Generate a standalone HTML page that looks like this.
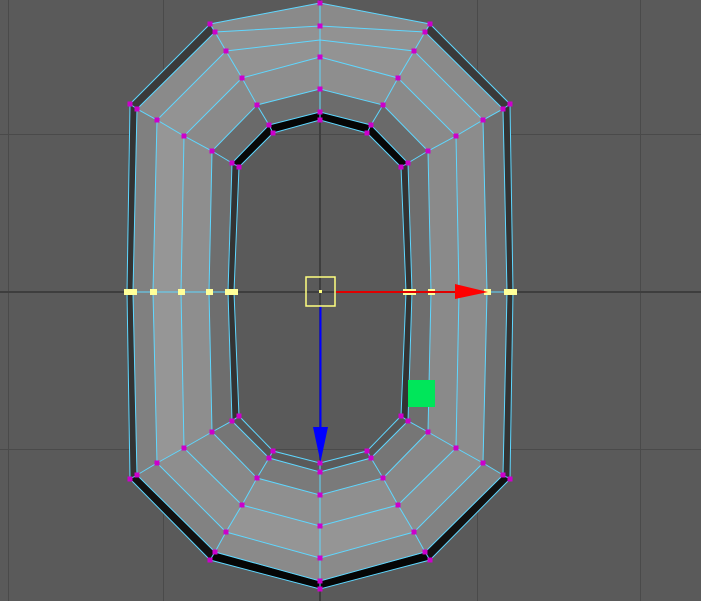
<!DOCTYPE html>
<html><head><meta charset="utf-8"><style>
html,body{margin:0;padding:0;background:#5a5a5a;width:701px;height:601px;overflow:hidden}
svg{display:block}
</style></head><body>
<svg id="s" width="701" height="601" viewBox="0 0 701 601" xmlns="http://www.w3.org/2000/svg">
<rect width="701" height="601" fill="#5a5a5a"/>
<g stroke="#4a4a4a" stroke-width="1">
<line x1="8.5" y1="0" x2="8.5" y2="601"/><line x1="163.5" y1="0" x2="163.5" y2="601"/>
<line x1="477.5" y1="0" x2="477.5" y2="601"/><line x1="640.5" y1="0" x2="640.5" y2="601"/>
<line x1="0" y1="134.5" x2="701" y2="134.5"/><line x1="0" y1="449.5" x2="701" y2="449.5"/>
</g>
<g stroke="#3e3e3e" stroke-width="2">
<line x1="320" y1="0" x2="320" y2="601"/><line x1="0" y1="292" x2="701" y2="292"/>
</g>
<g id="mesh"></g>
<g id="gz">
<line x1="320.5" y1="306" x2="320.5" y2="430" stroke="#0000ff" stroke-width="2"/>
<polygon points="313,427 328,427 320.5,462" fill="#0000ff"/>
<line x1="336" y1="292" x2="456" y2="292" stroke="#e00000" stroke-width="2"/>
<polygon points="455,284 455,299 488,292" fill="#ff0000"/>
<rect x="306" y="277" width="29" height="29" fill="none" stroke="#ffff80" stroke-width="1.5"/>
<rect x="319" y="290" width="3" height="3" fill="#ffff80"/>
<rect x="408" y="380" width="27" height="27" fill="#00e65a"/>
</g>
</svg>
<script>
var R=[
[[320,3],[210,24],[130,104],[127,292],[130,479],[210,560],[320,589]],
[[320,26],[215,32],[137,109],[133,292],[137,475],[215,552],[320,581]],
[[320,40],[226,51],[157,120],[153,292],[157,463],[226,532],[320,558]],
[[320,57],[242,78],[184,136],[181,292],[184,448],[242,505],[320,526]],
[[320,89],[257,105],[212,151],[209,292],[212,432],[257,478],[320,495]],
[[320,112],[269,125],[232,163],[228,292],[232,421],[269,458],[320,472]],
[[320,120],[273,133],[239,167],[234,292],[239,416],[273,451],[320,463]]];
function loop(r){var a=r.slice();for(var i=5;i>=1;i--)a.push([640-r[i][0],r[i][1]]);return a;}
var L=R.map(loop);
function col(b,i,right){
 var t=[0,1,2,2,3,4,4,3,2,2,1,0][i];
 var C=[
  ["#8a8a8a","#3a3a3a","#333333","#111111","#050505"],
  ["#929292","#8a8a8a",right?"#6e6e6e":"#808080","#828282","#8a8a8a"],
  ["#939393","#939393",right?"#8c8c8c":"#969696","#8e8e8e","#959595"],
  ["#8e8e8e","#8a8a8a",right?"#8a8a8a":"#8e8e8e","#888888","#8f8f8f"],
  ["#6c6c6c","#6a6a6a","#6e6e6e","#767676","#7a7a7a"],
  ["#050505","#080808","#333333","#555555","#5a5a5a"]];
 return C[b][t];
}
var h='';
for(var b=0;b<6;b++){var o=L[b],n=L[b+1];
 for(var i=0;i<12;i++){var j=(i+1)%12;
  var p=[o[i],o[j],n[j],n[i]].map(function(q){return q[0]+','+q[1]}).join(' ');
  h+='<polygon points="'+p+'" fill="'+col(b,i,i>=6)+'" stroke="'+col(b,i,i>=6)+'" stroke-width="0.6"/>';}}
for(var k=0;k<7;k++){h+='<polygon points="'+L[k].map(function(q){return q[0]+','+q[1]}).join(' ')+'" fill="none" stroke="#5fd7ff" stroke-width="1"/>';}
for(var i=0;i<12;i++){var p=L.map(function(r){return r[i][0]+','+r[i][1]}).join(' ');
 h+='<polyline points="'+p+'" fill="none" stroke="#5fd7ff" stroke-width="1"/>';}
for(var k=0;k<7;k++)for(var i=0;i<12;i++){var q=L[k][i];
 if(k==2&&(i==0||i==6&&false))continue;
 if(i==3||i==9)h+='<rect x="'+(q[0]-3)+'" y="289" width="7" height="6" fill="#ffff99"/>';
 else h+='<rect x="'+(q[0]-2.5)+'" y="'+(q[1]-2.5)+'" width="5" height="5" fill="#cc00cc"/>';}
document.getElementById('mesh').innerHTML=h;
</script>
</body></html>
